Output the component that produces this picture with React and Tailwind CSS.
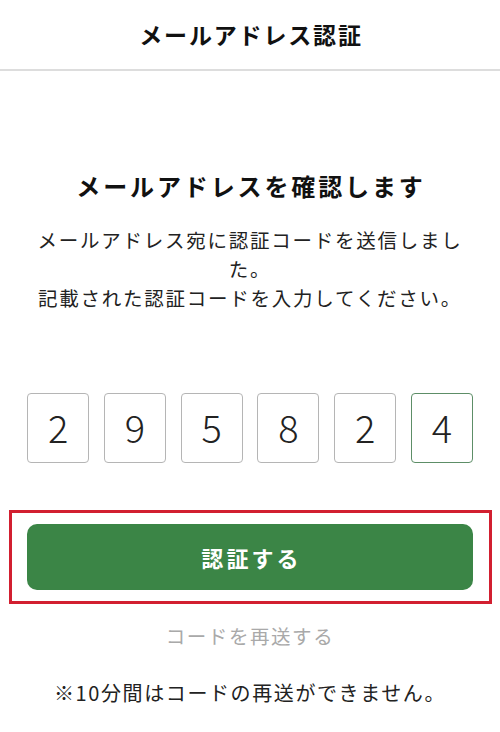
export default function App() {
  const digits = ["2", "9", "5", "8", "2", "4"];
  return (
    <div
      className="w-[500px] h-[732px] bg-white text-[#111] overflow-hidden"
      style={{ fontFamily: '"Noto Sans CJK JP", "Noto Sans", sans-serif' }}
    >
      <header className="h-[71px] border-b-2 border-[#dddddd] flex items-center justify-center">
        <h1 className="text-[23px] font-bold tracking-[0.08em] pl-[2px] leading-none">メールアドレス認証</h1>
      </header>
      <main className="flex flex-col items-center">
        <h2 className="mt-[100px] text-[24px] font-bold tracking-[0.12em] pl-[2px] leading-[30px]">
          メールアドレスを確認します
        </h2>
        <p className="mt-[24px] w-[440px] text-center text-[19.5px] leading-[29px] tracking-[0.09em] text-[#222]">
          メールアドレス宛に認証コードを送信しました。
          <br />
          記載された認証コードを入力してください。
        </p>
        <div className="mt-[81px] flex gap-[14.6px] w-[446px]">
          {digits.map((d, i) => (
            <div
              key={i}
              className={
                "w-[62.5px] h-[70px] rounded-[4px] border-[1.5px] flex items-center justify-center text-[38px] font-light text-[#222] " +
                (i === 5 ? "border-[#5d8e67]" : "border-[#b5b5b5]")
              }
            >
              <span className="leading-none -mt-[2px]">{d}</span>
            </div>
          ))}
        </div>
        <div className="mt-[47px] w-[483px] h-[94px] border-[3px] border-[#d21f30] flex items-center justify-center">
          <button className="w-[446px] h-[66px] rounded-[10px] bg-[#3b8546] text-white text-[22px] font-bold tracking-[0.14em] pl-[3px] flex items-center justify-center">
            認証する
          </button>
        </div>
        <div className="mt-[18px] text-[19.5px] leading-[28px] tracking-[0.08em] text-[#a9a9a9]">
          コードを再送する
        </div>
        <div className="mt-[29px] text-[20px] leading-[28px] tracking-[0.08em] text-[#222]">
          ※10分間はコードの再送ができません。
        </div>
      </main>
    </div>
  );
}
